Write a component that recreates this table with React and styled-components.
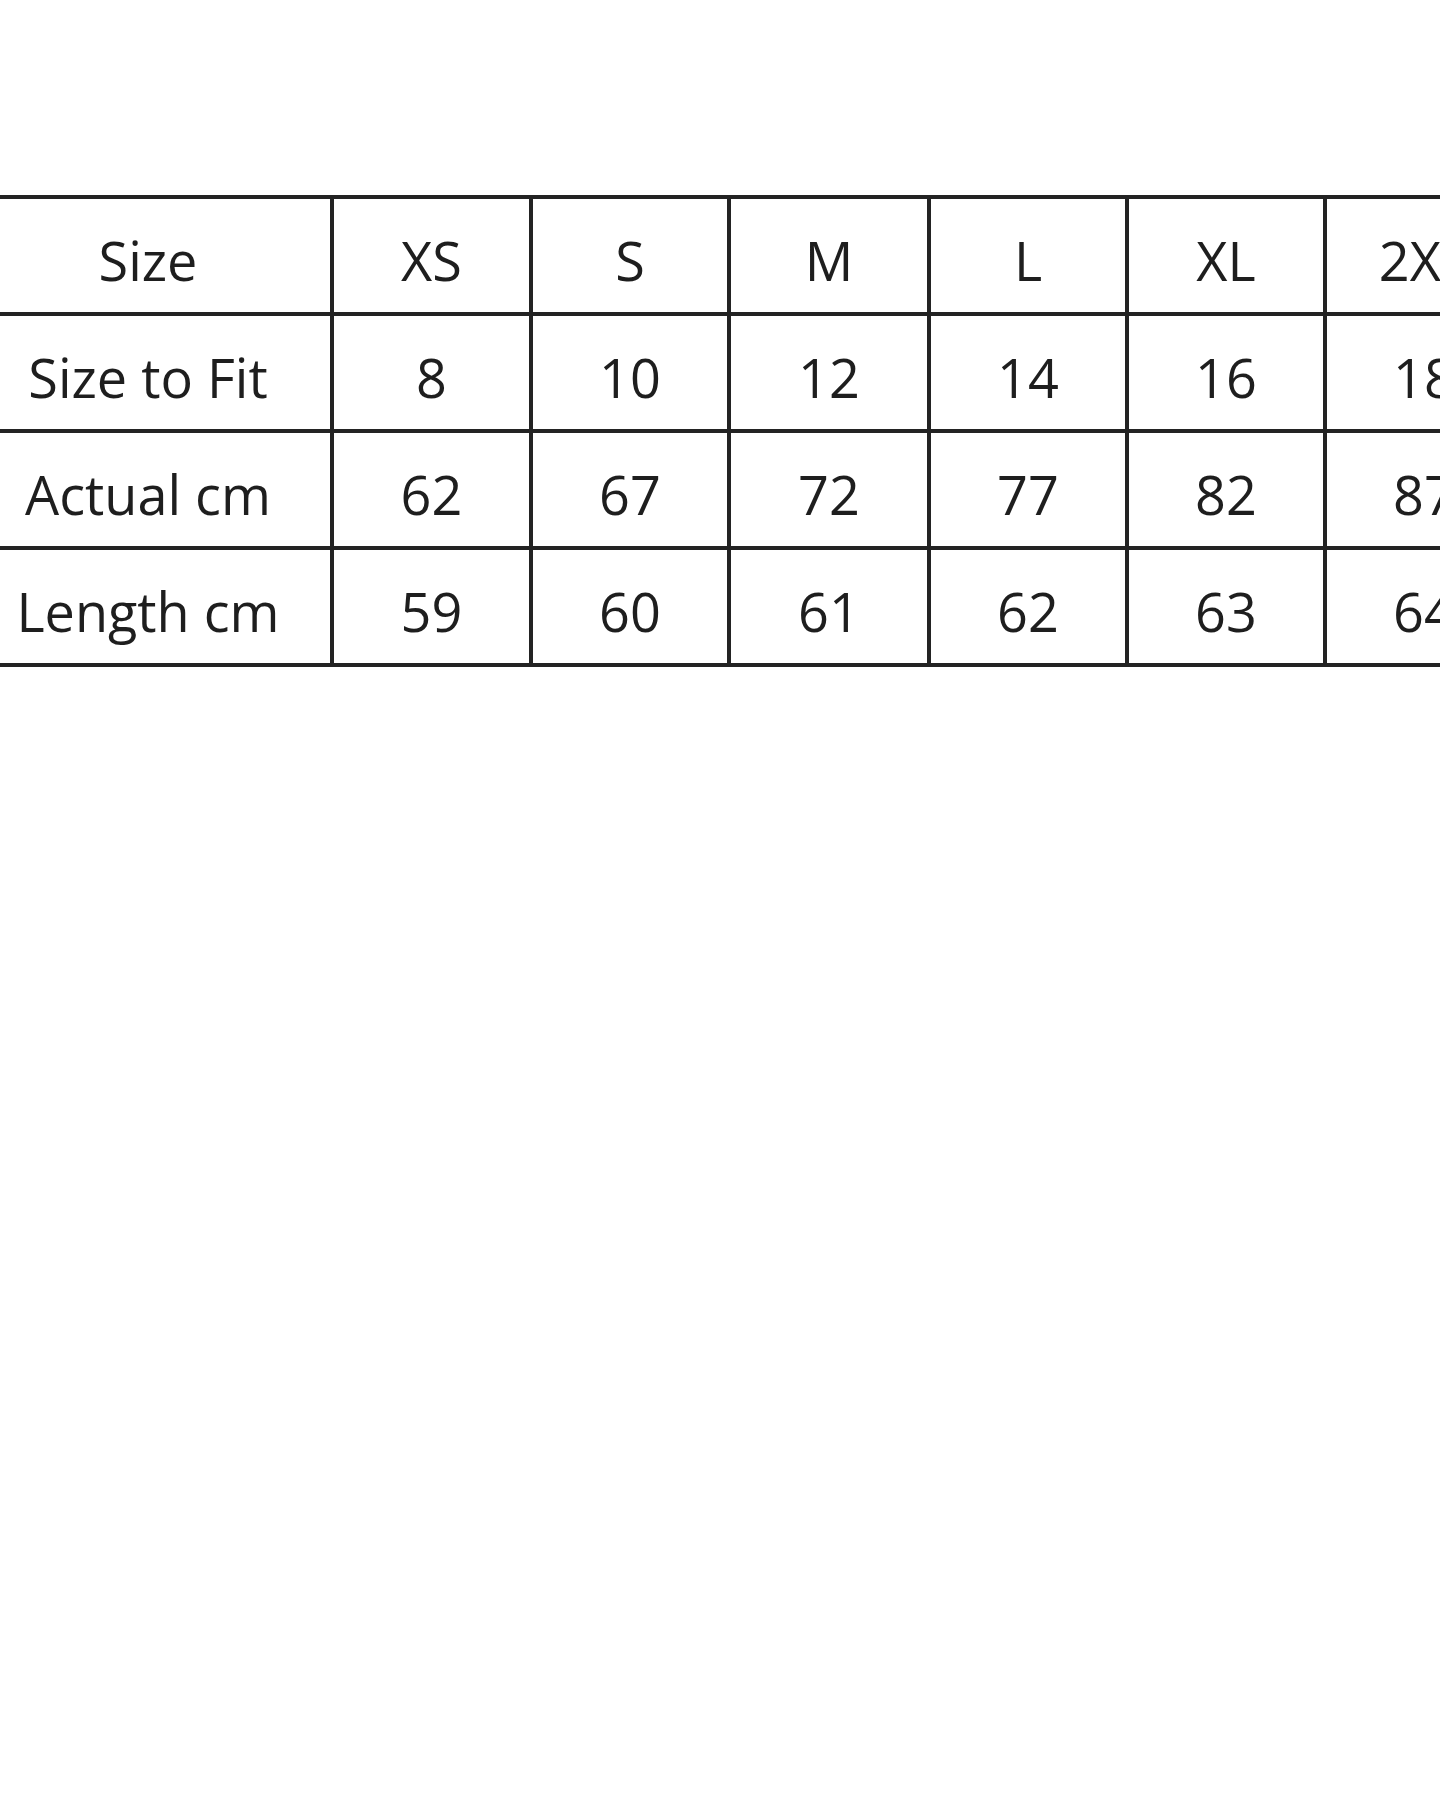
import * as React from 'react';
import styled, {createGlobalStyle} from 'styled-components';

const sizes = ['XS', 'S', 'M', 'L', 'XL', '2XL'];

const rows = [
	{label: 'Size to Fit', values: ['8', '10', '12', '14', '16', '18']},
	{label: 'Actual cm', values: ['62', '67', '72', '77', '82', '87']},
	{label: 'Length cm', values: ['59', '60', '61', '62', '63', '64']},
];

const colWidths = [368, 199, 198, 200, 198, 198, 198];

export default function App() {
	return (
		<>
			<GlobalStyle />
			<Page>
				<ChartTable>
					<colgroup>
						{colWidths.map((w, i) => (
							<col key={i} style={{width: w}} />
						))}
					</colgroup>
					<tbody>
						<Row>
							<Cell>Size</Cell>
							{sizes.map((s) => (
								<Cell key={s}>{s}</Cell>
							))}
						</Row>
						{rows.map((row) => (
							<Row key={row.label}>
								<Cell>{row.label}</Cell>
								{row.values.map((v, i) => (
									<Cell key={i}>{v}</Cell>
								))}
							</Row>
						))}
					</tbody>
				</ChartTable>
			</Page>
		</>
	);
}

const GlobalStyle = createGlobalStyle`
	html, body {
		margin: 0;
		padding: 0;
		background: #ffffff;
		overflow-x: hidden;
	}
	body {
		font-family: 'Open Sans', 'Noto Sans', sans-serif;
	}
`;

const Page = styled.div`
	width: 1440px;
	min-height: 1800px;
	overflow: hidden;
	background: #ffffff;
	padding-top: 195px;
	box-sizing: border-box;
`;

const ChartTable = styled.table`
	margin-left: -38px;
	border-collapse: collapse;
	table-layout: fixed;
	width: 1559px;
`;

const Row = styled.tr`
	height: 117px;
`;

const Cell = styled.td`
	border: 4px solid #232323;
	padding: 8px 0 0;
	text-align: center;
	vertical-align: middle;
	font-size: 54px;
	font-weight: 500;
	color: #1e1e1e;
	white-space: nowrap;
`;
